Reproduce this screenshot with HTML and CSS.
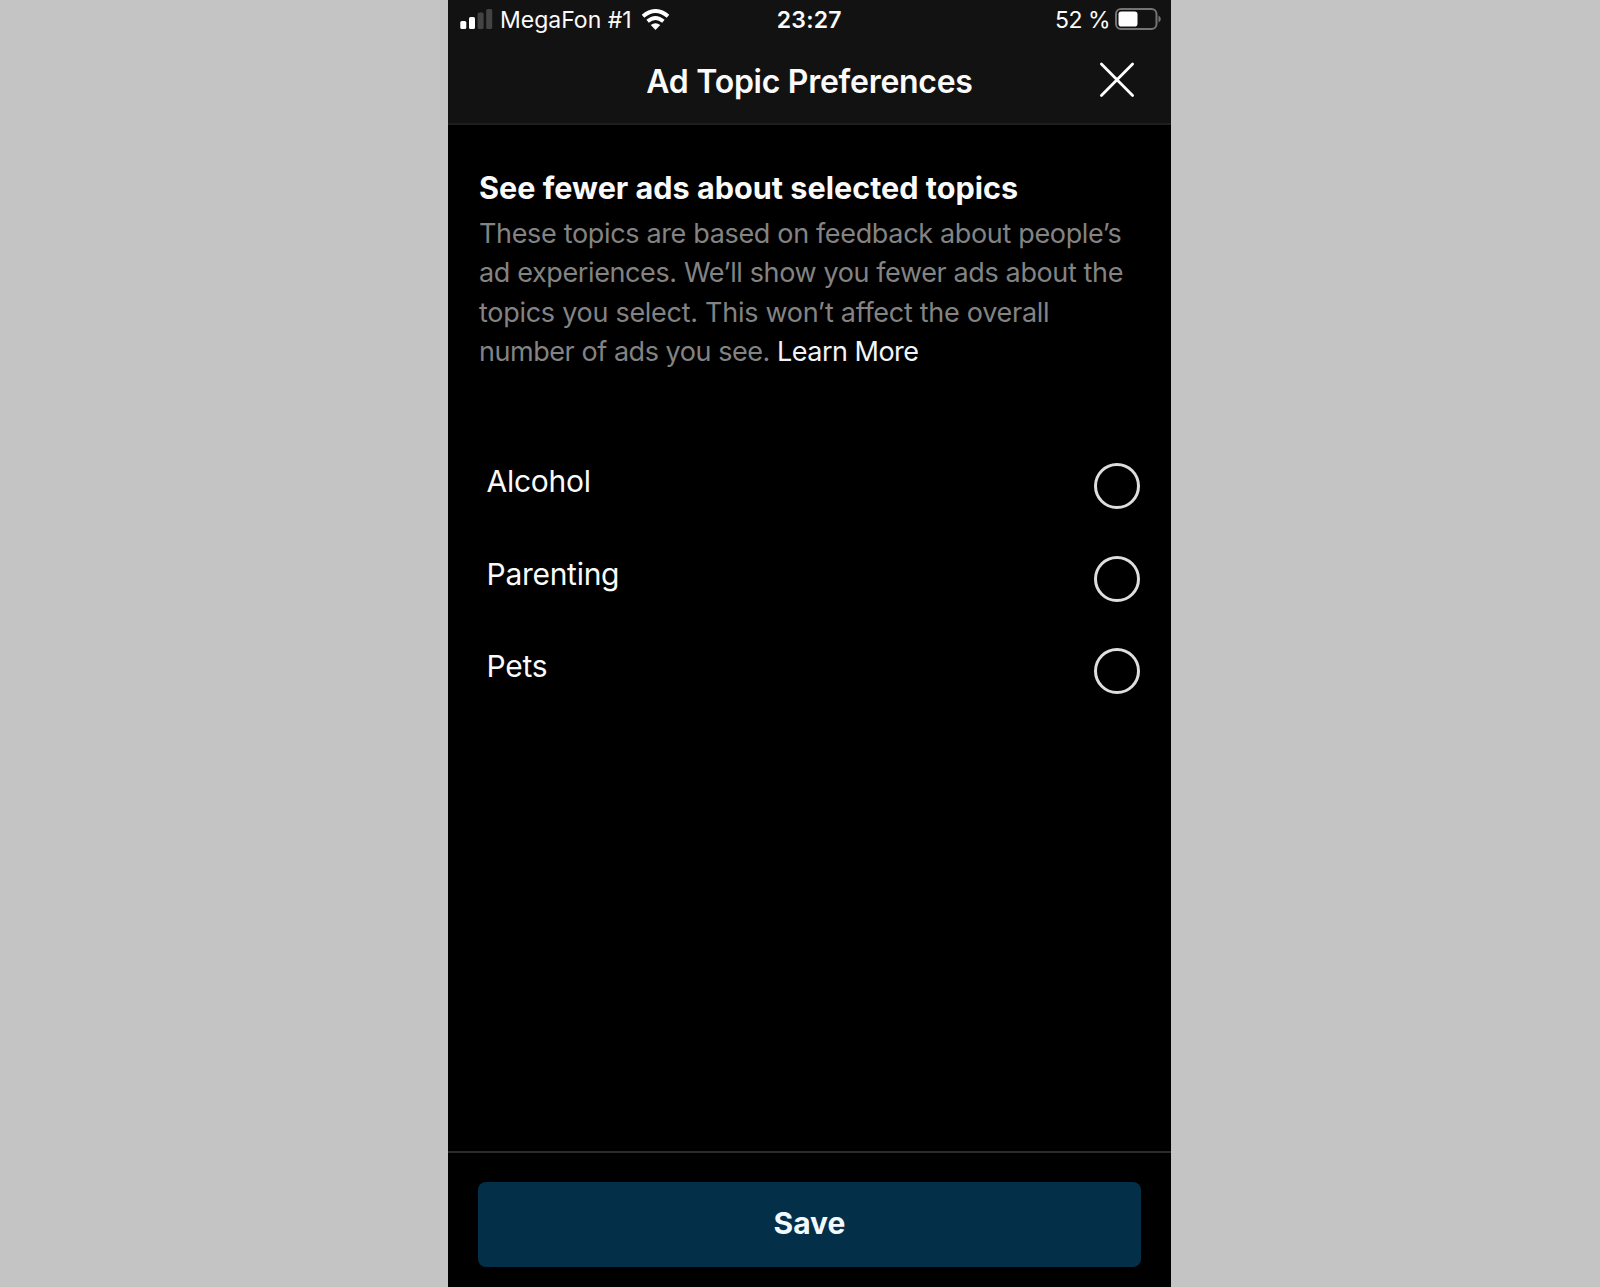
FILE: index.html
```html
<!DOCTYPE html>
<html lang="en">
<head>
<meta charset="utf-8">
<title>Ad Topic Preferences</title>
<link rel="stylesheet" href="styles.css">
</head>
<body>
<main class="phone">
  <header class="header">
    <div class="status">
      <div class="status-left">
        <svg class="signal" width="33" height="20" viewBox="0 0 33 20">
          <rect x="0.300" y="12" width="6" height="8" rx="1.6" fill="#fff"/>
          <rect x="9" y="8" width="6" height="12" rx="1.6" fill="#fff"/>
          <rect x="17.600" y="3.5" width="6" height="16.5" rx="1.6" fill="#434343"/>
          <rect x="26.200" y="0" width="6" height="20" rx="1.6" fill="#434343"/>
        </svg>
        <span class="carrier">MegaFon #1</span>
        <svg class="wifi" width="29" height="21" viewBox="0 0 29 21">
          <path d="M2 7.3Q14.500 -3.200 27 7.300" fill="none" stroke="#fff" stroke-width="4"/>
          <path d="M6.600 12.300Q14.500 5.700 22.400 12.300" fill="none" stroke="#fff" stroke-width="3.800"/>
          <path d="M9.700 16.100Q14.500 12.500 19.300 16.100L14.500 21Z" fill="#fff"/>
        </svg>
      </div>
      <time class="clock">23:27</time>
      <div class="status-right">
        <span class="percent">52 %</span>
        <svg class="battery" width="46" height="22" viewBox="0 0 46 22">
          <rect x="1" y="1" width="40.500" height="20" rx="5" fill="none" stroke="#747474" stroke-width="2"/>
          <rect x="3.500" y="3.500" width="19" height="15" rx="2.800" fill="#fff"/>
          <path d="M43.500 7.500Q45.800 8.700 45.800 11T43.500 14.500Z" fill="#747474"/>
        </svg>
      </div>
    </div>
    <div class="titlebar">
      <h1 class="title">Ad Topic Preferences</h1>
      <button class="close" aria-label="Close">
        <svg width="36" height="36" viewBox="0 0 36 36"><path d="M2.400 2L33.600 33.400M33.600 2L2.400 33.400" stroke="#fff" stroke-width="2.800" stroke-linecap="round"/></svg>
      </button>
    </div>
  </header>
  <section class="content">
    <h2 class="heading">See fewer ads about selected topics</h2>
    <p class="description">
      <span class="line line-1">These topics are based on feedback about people’s</span>
      <span class="line line-2">ad experiences. We’ll show you fewer ads about the</span>
      <span class="line line-3">topics you select. This won’t affect the overall</span>
      <span class="line line-4">number of ads you see. <a class="link">Learn More</a></span>
    </p>
    <ul class="topics">
      <li class="topic"><span class="name">Alcohol</span><span class="radio"></span></li>
      <li class="topic"><span class="name">Parenting</span><span class="radio"></span></li>
      <li class="topic"><span class="name">Pets</span><span class="radio"></span></li>
    </ul>
  </section>
  <footer class="footer">
    <button class="save">Save</button>
  </footer>
</main>
</body>
</html>
```

FILE: styles.css
```css
* { box-sizing: border-box; margin: 0; padding: 0; }

body {
  height: 1287px;
  display: flex;
  background: #c4c4c4;
  font-family: Inter, "Liberation Sans", sans-serif;
  overflow: hidden;
}

.phone {
  width: 723px;
  height: 1287px;
  margin-left: 448px;
  display: flex;
  flex-direction: column;
  background: #000;
  color: #fafafa;
}

.header {
  height: 125px;
  border-bottom: 2px solid #1f1f1f;
  background: #121212;
}

.status {
  height: 40px;
  padding: 0 10.500px 0 12px;
  display: grid;
  grid-template-columns: 1fr auto 1fr;
  font-size: 23px;
  line-height: 40px;
  white-space: nowrap;
}

.status-left, .status-right { display: flex; align-items: flex-start; }
.status-right { justify-content: flex-end; }
.signal { margin-top: 9px; }
.carrier { margin-left: 7px; width: 132px; }
.wifi { margin: 9px 0 0 9px; }
.clock { margin: 0 2px 0 0; font-weight: 600; letter-spacing: 0.2px; }
.percent { letter-spacing: -0.5px; }
.battery { margin: 8px 0 0 4.500px; }

.titlebar {
  height: 83px;
  padding: 0 36px;
  display: grid;
  grid-template-columns: 36px 1fr 36px;
}

.title {
  grid-column: 2;
  text-align: center;
  font-size: 32px;
  font-weight: 600;
  line-height: 83px;
  letter-spacing: -0.27px;
  white-space: nowrap;
}

.close { grid-column: 3; margin-top: 22px; width: 36px; height: 36px; border: 0; background: none; }
.close svg { display: block; }

.content { flex: 1; padding: 43px 31px 0; }

.heading {
  font-size: 30.6px;
  font-weight: 700;
  line-height: 40px;
  white-space: nowrap;
}

.description {
  margin-top: 5.5px;
  color: #838383;
  font-size: 27px;
  line-height: 39.6px;
}

.line { display: block; white-space: nowrap; font-variant-ligatures: no-common-ligatures; }
.line-1 { letter-spacing: -0.34px; }
.line-2 { letter-spacing: -0.38px; }
.line-3 { letter-spacing: -0.28px; }
.line-4 { letter-spacing: -0.45px; }
.link { color: #f2f4fb; letter-spacing: -0.52px; }

.topics { margin-top: 89.2px; list-style: none; }

.topic {
  height: 92.6px;
  padding-left: 7.5px;
  display: flex;
  justify-content: space-between;
  font-size: 30px;
  line-height: 40.8px;
  letter-spacing: -0.28px;
}

.radio {
  width: 46px;
  height: 46px;
  margin-top: 2px;
  border: 3px solid #dedede;
  border-radius: 50%;
}

.footer {
  height: 136px;
  padding: 29px 30px 0;
  border-top: 2px solid #2b2b2b;
}

.save {
  width: 663px;
  height: 85px;
  display: block;
  border: 0;
  border-radius: 8px;
  background: #032f49;
  color: #f3faff;
  font: 700 30px/40px Inter, "Liberation Sans", sans-serif;
  padding-bottom: 4px;
}
```
